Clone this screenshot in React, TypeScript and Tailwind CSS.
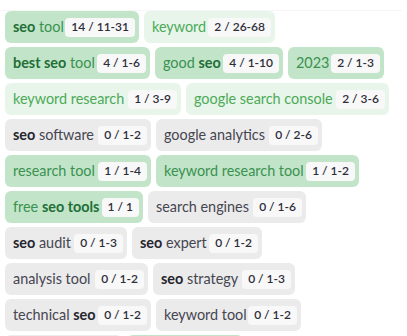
import React from "react";

type Seg = { t: string; b?: boolean };
type Chip = { segs: Seg[]; badge: string; kind: "dark" | "light" | "gray"; w: string };

const chips: Chip[] = [
  { segs: [{ t: "seo", b: true }, { t: " tool" }], badge: "14 / 11-31", kind: "dark", w: "w-[134px]" },
  { segs: [{ t: "keyword" }], badge: "2 / 26-68", kind: "light", w: "w-[131px]" },
  { segs: [{ t: "best seo", b: true }, { t: " tool" }], badge: "4 / 1-6", kind: "dark", w: "w-[145px]" },
  { segs: [{ t: "good " }, { t: "seo", b: true }], badge: "4 / 1-10", kind: "dark", w: "w-[128px]" },
  { segs: [{ t: "2023" }], badge: "2 / 1-3", kind: "dark", w: "w-[96px]" },
  { segs: [{ t: "keyword research" }], badge: "1 / 3-9", kind: "light", w: "w-[176px]" },
  { segs: [{ t: "google search console" }], badge: "2 / 3-6", kind: "light", w: "w-[203px]" },
  { segs: [{ t: "seo", b: true }, { t: " software" }], badge: "0 / 1-2", kind: "gray", w: "w-[146px]" },
  { segs: [{ t: "google analytics" }], badge: "0 / 2-6", kind: "gray", w: "w-[166px]" },
  { segs: [{ t: "research tool" }], badge: "1 / 1-4", kind: "dark", w: "w-[146px]" },
  { segs: [{ t: "keyword research tool" }], badge: "1 / 1-2", kind: "dark", w: "w-[203px]" },
  { segs: [{ t: "free " }, { t: "seo tools", b: true }], badge: "1 / 1", kind: "dark", w: "w-[138px]" },
  { segs: [{ t: "search engines" }], badge: "0 / 1-6", kind: "gray", w: "w-[158px]" },
  { segs: [{ t: "seo", b: true }, { t: " audit" }], badge: "0 / 1-3", kind: "gray", w: "w-[122px]" },
  { segs: [{ t: "seo", b: true }, { t: " expert" }], badge: "0 / 1-2", kind: "gray", w: "w-[130px]" },
  { segs: [{ t: "analysis tool" }], badge: "0 / 1-2", kind: "gray", w: "w-[143px]" },
  { segs: [{ t: "seo", b: true }, { t: " strategy" }], badge: "0 / 1-3", kind: "gray", w: "w-[142px]" },
  { segs: [{ t: "technical " }, { t: "seo", b: true }], badge: "0 / 1-2", kind: "gray", w: "w-[146px]" },
  { segs: [{ t: "keyword tool" }], badge: "0 / 1-2", kind: "gray", w: "w-[145px]" },
  { segs: [{ t: "seo", b: true }, { t: " report" }], badge: "0 / 1-2", kind: "gray", w: "w-[117px]" },
  { segs: [{ t: "tool" }, { t: " seo", b: true }], badge: "1 / 1-2", kind: "dark", w: "w-[116px]" },
];

const chipBg = {
  dark: "bg-[#c2e5c9] text-[#3a9150]",
  light: "bg-[#e8f5ea] text-[#4caa58]",
  gray: "bg-[#ebebec] text-[#464650]",
};
const boldCls = {
  dark: "font-bold text-[#1f6f37]",
  light: "font-bold text-[#2f8a40]",
  gray: "font-bold text-[#25252d]",
};

export default function App() {
  return (
    <div className="w-[407px] h-[336px] overflow-hidden bg-white" style={{ fontFamily: "Lato, 'Noto Sans', sans-serif" }}>
      <div className="h-[10px]" />
      <div className="w-[402px] border-t border-[#f6f6f6]">
        <div className="w-[397px] ml-[5px] flex flex-wrap gap-x-[5px] gap-y-[4px]">
          {chips.map((c, i) => (
            <div
              key={i}
              className={`${c.w} ${chipBg[c.kind]} h-[32px] rounded-[6px] pl-2 pr-1 flex items-center justify-between text-[14.4px] whitespace-nowrap`}
            >
              <span>
                {c.segs.map((s, j) => (
                  <span key={j} className={s.b ? boldCls[c.kind] : ""}>
                    {s.t}
                  </span>
                ))}
              </span>
              <span className="h-[19px] px-[6px] rounded-[4px] bg-[#f8f8f8] text-[#2e2e38] text-[12px] font-semibold flex items-center">
                {c.badge}
              </span>
            </div>
          ))}
        </div>
      </div>
    </div>
  );
}
